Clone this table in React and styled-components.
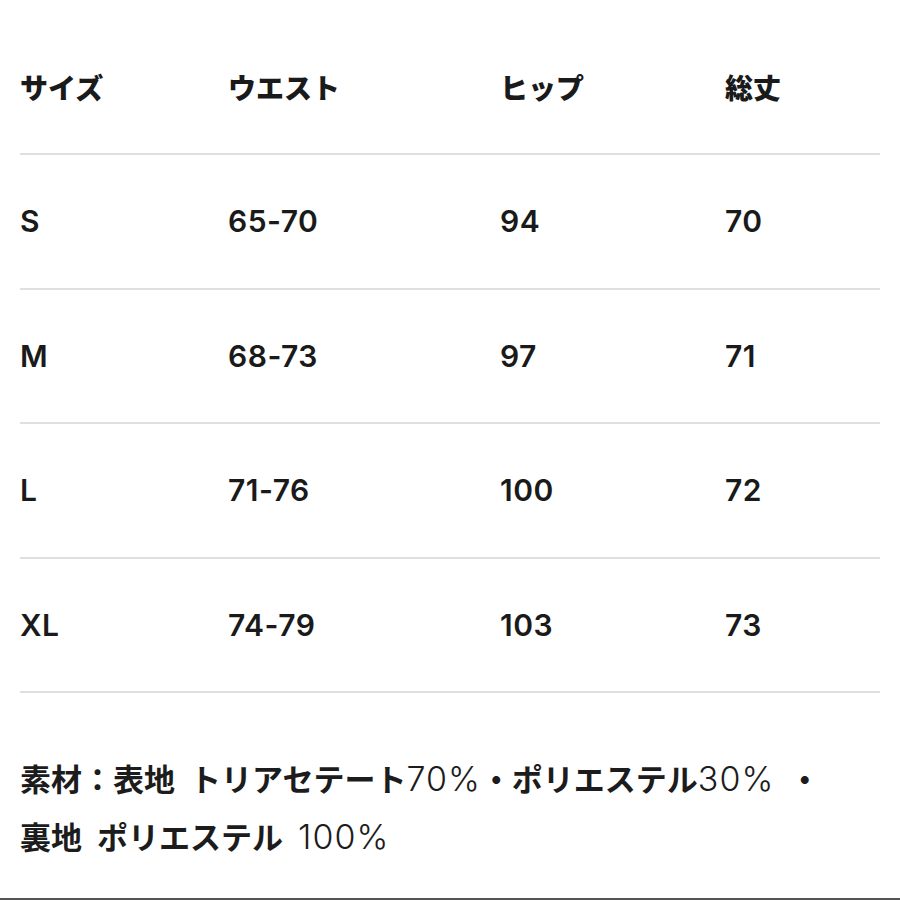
import React from "react";
import styled, { createGlobalStyle } from "styled-components";

const GlobalStyle = createGlobalStyle`
  html, body {
    margin: 0;
    padding: 0;
    background: #ffffff;
  }
  body {
    font-family: "Noto Sans CJK JP", "Noto Sans", sans-serif;
    color: #1c1c1c;
  }
`;

const rows = [
  { size: "S", waist: "65-70", hip: "94", length: "70" },
  { size: "M", waist: "68-73", hip: "97", length: "71" },
  { size: "L", waist: "71-76", hip: "100", length: "72" },
  { size: "XL", waist: "74-79", hip: "103", length: "73" },
];

function SizeChart() {
  return (
    <Page>
      <Table>
        <Row head>
          <HeadCell>サイズ</HeadCell>
          <HeadCell>ウエスト</HeadCell>
          <HeadCell>ヒップ</HeadCell>
          <HeadCell>総丈</HeadCell>
        </Row>
        {rows.map((r) => (
          <Row key={r.size}>
            <Cell>{r.size}</Cell>
            <Cell>{r.waist}</Cell>
            <Cell>{r.hip}</Cell>
            <Cell>{r.length}</Cell>
          </Row>
        ))}
      </Table>

      <Notes>
        <Line>
          素材：表地 トリアセテート<Num>70%</Num>・ポリエステル<Num>30%</Num> ・
        </Line>
        <Line>
          裏地 ポリエステル <Num>100%</Num>
        </Line>
      </Notes>
    </Page>
  );
}

const Page = styled.div`
  height: 900px;
  box-sizing: border-box;
  padding: 20px 20px 0;
  border-bottom: 2px solid #555555;
  display: flex;
  flex-direction: column;
`;

const Table = styled.div`
  display: flex;
  flex-direction: column;
`;

const Row = styled.div`
  display: grid;
  grid-template-columns: 208px 272px 225px 1fr;
  align-items: center;
  height: ${(p) => (p.head ? "133px" : "132.5px")};
  border-bottom: 2px solid #dfdfdf;
`;

const HeadCell = styled.div`
  font-family: "Noto Sans CJK JP", sans-serif;
  font-weight: 900;
  font-size: 28px;
  line-height: 1;
  color: #1a1a1a;
`;

const Cell = styled.div`
  font-family: Inter, "Liberation Sans", sans-serif;
  font-weight: 600;
  font-size: 30px;
  letter-spacing: 0.5px;
  line-height: 1;
  color: #1a1a1a;
`;

const Notes = styled.div`
  margin-top: 56px;
  display: flex;
  flex-direction: column;
`;

const Line = styled.div`
  font-family: "Noto Sans CJK JP", sans-serif;
  font-weight: 700;
  font-size: 31px;
  line-height: 57px;
  word-spacing: 8px;
  white-space: nowrap;
  color: #1c1c1c;
`;

const Num = styled.span`
  font-family: Inter, "Liberation Sans", sans-serif;
  font-weight: 300;
  font-size: 34px;
  letter-spacing: 1px;
`;

export default function App() {
  return (
    <>
      <GlobalStyle />
      <SizeChart />
    </>
  );
}
